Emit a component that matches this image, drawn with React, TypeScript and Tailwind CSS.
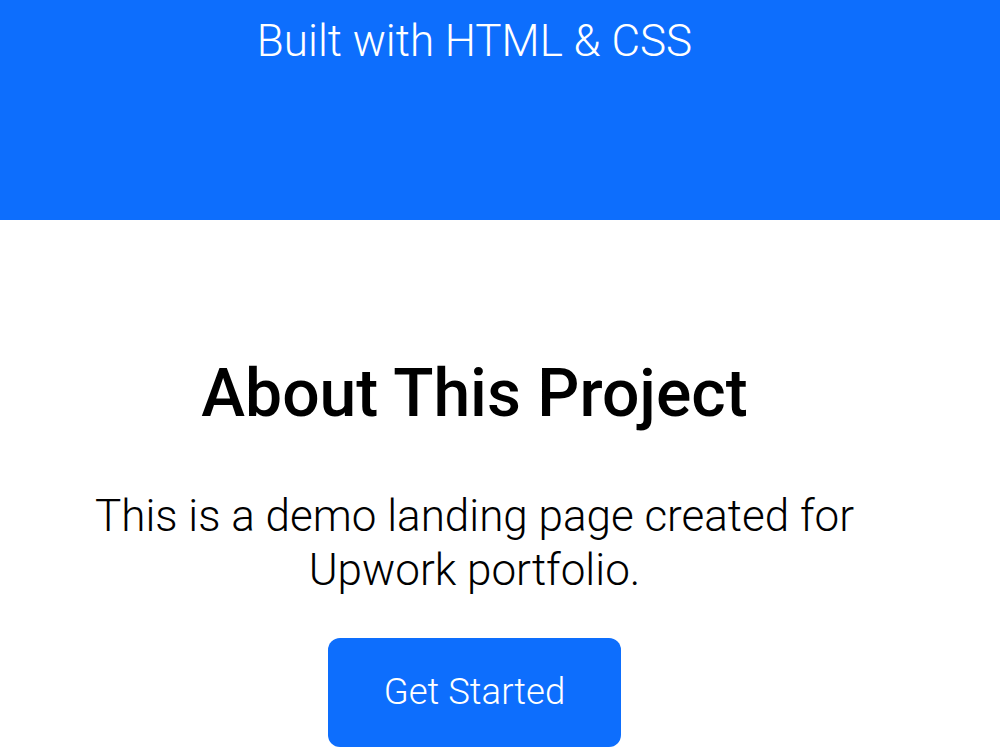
export default function App() {
  return (
    <div
      className="w-full bg-white text-black"
      style={{ fontFamily: "Roboto, 'Noto Sans', sans-serif" }}
    >
      <header className="h-[220px] bg-[#0d6efd] pt-[19px] text-white">
        <p className="w-[949px] text-center text-[44px] font-light leading-none">
          Built with HTML &amp; CSS
        </p>
      </header>

      <section className="flex w-[949px] flex-col items-center pt-[141px] text-center">
        <h2 className="text-[66px] font-medium leading-none">About This Project</h2>
        <p className="mt-[62px] max-w-[800px] text-[44px] font-light leading-[54px]">
          This is a demo landing page created for Upwork portfolio.
        </p>
        <button className="mt-[41px] h-[109px] w-[293px] rounded-[12px] bg-[#0d6efd] text-[36.5px] font-light text-white">
          Get Started
        </button>
      </section>
    </div>
  );
}
